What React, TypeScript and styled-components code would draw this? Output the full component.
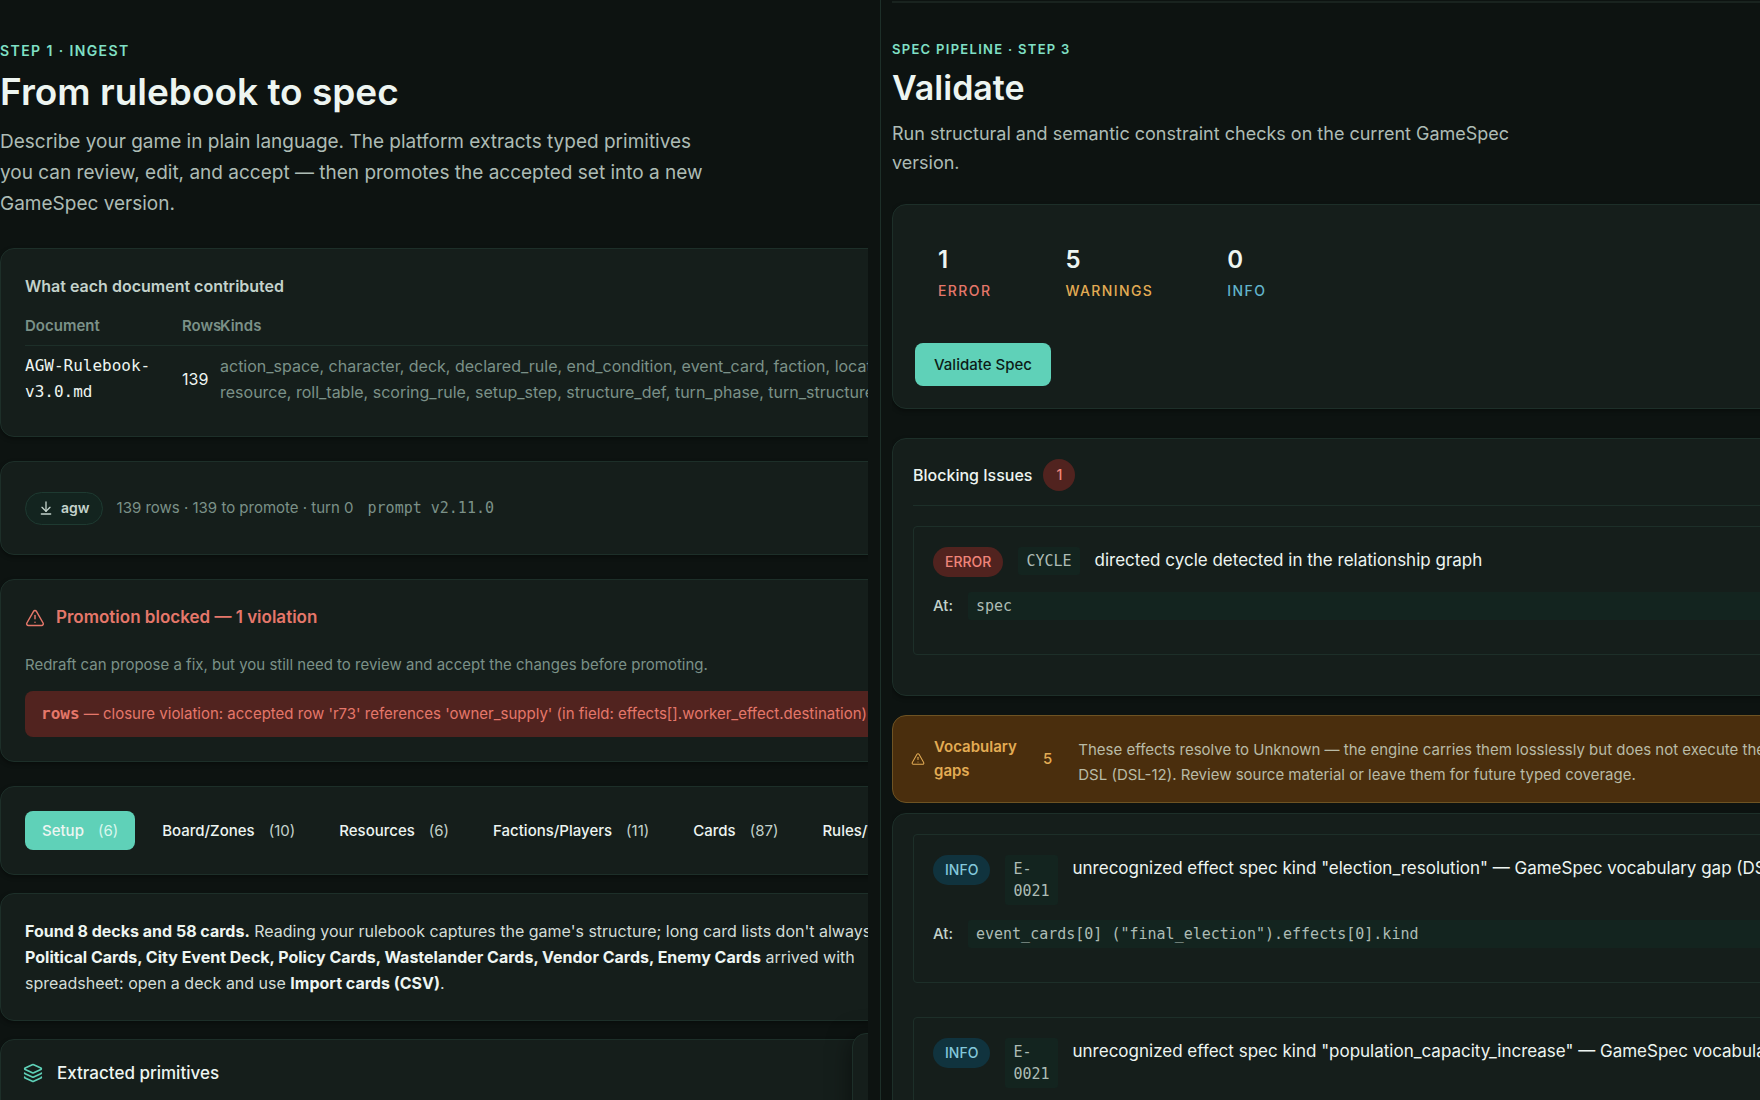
import React from "react";
import styled, { createGlobalStyle, css } from "styled-components";
import { ArrowDownToLine, Layers, TriangleAlert } from "lucide-react";

const color = {
  page: "#0d1311",
  card: "#151e1b",
  line: "#1d2f29",
  raised: "#13241f",
  text: "#edf5f1",
  soft: "#c3d2cb",
  body: "#adbcb5",
  muted: "#7b9188",
  teal: "#5fd1b8",
  mint: "#80e0c6",
  red: "#e5776a",
  redBg: "#51231f",
  gold: "#e3ac54",
  goldBg: "#4a2e0d",
  goldLine: "#6e5323",
  blue: "#62b4cc",
  blueBg: "#10333e",
};

const sans = `Inter, "Liberation Sans", sans-serif`;
const mono = `"DejaVu Sans Mono", "Liberation Mono", monospace`;

const GlobalStyle = createGlobalStyle`
  *, *::before, *::after { box-sizing: border-box; }
  body { margin: 0; background: ${color.page}; }
  h1, h2, p { margin: 0; }
  button { font: inherit; cursor: pointer; }
`;

const Page = styled.main`
  display: grid;
  grid-template-columns: 1fr 1fr;
  height: 100vh;
  overflow: hidden;
  background: ${color.page};
  color: ${color.text};
  font-family: ${sans};
  font-size: 16px;
  line-height: 26px;
`;

const Pane = styled.section<{ $divided?: boolean }>`
  min-width: 0;
  overflow: hidden;
  ${(p) =>
    p.$divided
      ? css`
          border-left: 1px solid ${color.line};
          padding-left: 11px;
        `
      : css`
          padding-right: 12px;
        `}
`;

const Viewport = styled.div`
  position: relative;
  height: 100%;
  overflow: hidden;
`;

const Canvas = styled.div`
  width: 125%;
  display: flex;
  flex-direction: column;
`;

const TopRule = styled.div`
  height: 3px;
  border-bottom: 2px solid #19231f;
`;

const Header = styled.header<{ $compact?: boolean }>`
  display: flex;
  flex-direction: column;
  padding: ${(p) => (p.$compact ? "36px 0 27px" : "41px 0 29px")};
`;

const Eyebrow = styled.p<{ $compact?: boolean }>`
  color: ${color.mint};
  font-size: ${(p) => (p.$compact ? 13 : 14)}px;
  font-weight: 600;
  line-height: 20px;
  letter-spacing: 0.1em;
  text-transform: uppercase;
`;

const PageTitle = styled.h1<{ $compact?: boolean }>`
  margin-top: 9px;
  font-size: ${(p) => (p.$compact ? 34 : 37)}px;
  font-weight: 600;
  line-height: ${(p) => (p.$compact ? 40 : 44)}px;
`;

const Lead = styled.p<{ $compact?: boolean }>`
  margin-top: ${(p) => (p.$compact ? 11 : 12)}px;
  max-width: ${(p) => (p.$compact ? 660 : 720)}px;
  color: ${color.body};
  font-size: ${(p) => (p.$compact ? 18 : 19)}px;
  line-height: ${(p) => (p.$compact ? 29 : 31)}px;
`;

const Card = styled.section<{ $pad?: number; $gap?: number }>`
  margin-bottom: ${(p) => p.$gap ?? 24}px;
  padding: ${(p) => p.$pad ?? 24}px;
  border: 1px solid ${color.line};
  border-radius: 14px;
  background: ${color.card};
  box-shadow: 0 2px 4px rgba(0, 0, 0, 0.35);
  white-space: nowrap;
`;

const CardTitle = styled.h2`
  margin-bottom: 8px;
  color: ${color.soft};
  font-size: 16px;
  font-weight: 600;
  line-height: 26px;
`;

const DocTable = styled.table`
  width: 100%;
  table-layout: fixed;
  border-collapse: collapse;
`;

const HeadCell = styled.th<{ $width?: number }>`
  width: ${(p) => (p.$width ? `${p.$width}px` : "auto")};
  padding: 8px 0;
  border-bottom: 1px solid ${color.line};
  color: ${color.muted};
  font-size: 15px;
  font-weight: 600;
  line-height: 22px;
  text-align: left;
`;

const Cell = styled.td<{ $tone?: "file" | "muted" }>`
  padding: 7px 0;
  vertical-align: middle;
  ${(p) =>
    p.$tone === "file" &&
    css`
      font-family: ${mono};
      white-space: normal;
    `}
  ${(p) =>
    p.$tone === "muted" &&
    css`
      color: ${color.muted};
    `}
`;

const SummaryRow = styled.div`
  display: flex;
  align-items: center;
  gap: 14px;
  height: 44px;
  color: ${color.muted};
  font-size: 15px;
`;

const SourcePill = styled.button`
  display: flex;
  align-items: center;
  gap: 7px;
  height: 33px;
  padding: 0 12px;
  border: 1px solid #1e3a31;
  border-radius: 17px;
  background: ${color.raised};
  color: ${color.soft};
  font-size: 14px;
  font-weight: 600;
`;

const MonoText = styled.span`
  font-family: ${mono};
  font-size: 15px;
`;

const AlertTitle = styled.h2`
  display: flex;
  align-items: center;
  gap: 11px;
  margin-bottom: 22px;
  color: ${color.red};
  font-size: 17px;
  font-weight: 600;
  line-height: 27px;
`;

const Hint = styled.p`
  margin-bottom: 14px;
  color: ${color.muted};
  font-size: 15px;
  line-height: 24px;
`;

const Violation = styled.p`
  padding: 10px 16px;
  border-radius: 8px;
  background: ${color.redBg};
  color: ${color.red};
  font-size: 15px;
`;

const ViolationKey = styled.strong`
  font-family: ${mono};
  font-size: 16px;
  font-weight: 700;
`;

const Tabs = styled.nav`
  display: flex;
  gap: 10px;
`;

const Tab = styled.button<{ $active?: boolean }>`
  display: flex;
  flex: none;
  gap: 14px;
  padding: 6px 16px;
  border: 1px solid transparent;
  border-radius: 8px;
  background: ${(p) => (p.$active ? color.teal : "transparent")};
  color: ${color.text};
  font-size: 15px;
  font-weight: 500;
  line-height: 25px;
`;

const TabCount = styled.span<{ $active?: boolean }>`
  color: ${(p) => (p.$active ? "#d9f7ee" : color.soft)};
  font-weight: 400;
`;

const Prose = styled.p`
  color: #d3ddd8;
  strong {
    color: ${color.text};
    font-weight: 700;
  }
`;

const SectionTitle = styled.h2`
  display: flex;
  align-items: flex-start;
  gap: 14px;
  min-height: 60px;
  font-size: 17px;
  font-weight: 500;
  line-height: 22px;
  svg {
    margin-top: 1px;
    color: ${color.teal};
  }
`;

const FloatingPanel = styled.aside`
  position: absolute;
  right: -184px;
  bottom: -33px;
  width: 200px;
  height: 100px;
  border: 1px solid ${color.line};
  border-radius: 14px;
  background: ${color.card};
  box-shadow: 0 4px 24px rgba(0, 0, 0, 0.5);
`;

const Stats = styled.dl`
  display: flex;
  gap: 28px;
  margin: 0 0 23px;
  padding: 18px 0;
`;

const Stat = styled.div`
  display: flex;
  flex-direction: column-reverse;
  gap: 5px;
  padding: 0 23px;
`;

const StatLabel = styled.dt<{ $color: string }>`
  color: ${(p) => p.$color};
  font-size: 14px;
  font-weight: 500;
  line-height: 22px;
  letter-spacing: 0.1em;
`;

const StatValue = styled.dd`
  margin: 0;
  font-size: 24px;
  font-weight: 600;
  line-height: 30px;
`;

const PrimaryButton = styled.button`
  display: block;
  padding: 9px 19px;
  border: 0;
  border-radius: 8px;
  background: ${color.teal};
  color: #0c1c17;
  font-size: 15px;
  font-weight: 500;
  line-height: 25px;
`;

const GroupHead = styled.header`
  display: flex;
  align-items: center;
  gap: 11px;
  margin-bottom: 20px;
  padding-bottom: 14px;
  border-bottom: 1px solid ${color.line};
`;

const GroupTitle = styled.h2`
  font-size: 16px;
  font-weight: 500;
`;

const CountBadge = styled.span`
  width: 32px;
  border-radius: 16px;
  background: ${color.redBg};
  color: #f0857a;
  font-size: 14px;
  font-weight: 500;
  line-height: 32px;
  text-align: center;
`;

const IssueList = styled.div`
  display: flex;
  flex-direction: column;
  gap: 14px;
`;

const IssueBox = styled.article`
  margin-bottom: 20px;
  padding: 20px 19px 34px;
  border: 1px solid ${color.line};
  border-radius: 4px;
`;

const IssueRow = styled.div`
  display: flex;
  align-items: flex-start;
  gap: 15px;
  margin-bottom: 15px;
`;

const Severity = styled.span<{ $info?: boolean }>`
  padding: 0 12px;
  border-radius: 15px;
  background: ${(p) => (p.$info ? color.blueBg : color.redBg)};
  color: ${(p) => (p.$info ? "#83c8dc" : "#f0857a")};
  font-size: 14px;
  font-weight: 500;
  line-height: 30px;
`;

const Chip = styled.code<{ $wide?: boolean }>`
  width: ${(p) => (p.$wide ? "auto" : "min-content")};
  flex: ${(p) => (p.$wide ? "1" : "none")};
  padding: 3px 8px;
  border-radius: 3px;
  background: ${color.raised};
  color: ${color.body};
  font-family: ${mono};
  font-size: 15px;
  line-height: 22px;
  white-space: ${(p) => (p.$wide ? "nowrap" : "normal")};
`;

const Message = styled.p`
  font-size: 17px;
  line-height: 26px;
`;

const Location = styled.div`
  display: flex;
  gap: 15px;
  color: ${color.soft};
  font-size: 15px;
  font-weight: 500;
  line-height: 28px;
`;

const Banner = styled.section`
  display: flex;
  align-items: center;
  margin: -5px 0 10px;
  padding: 15px 18px;
  border: 1px solid ${color.goldLine};
  border-radius: 14px;
  background: ${color.goldBg};
  color: ${color.gold};
  font-size: 15px;
  white-space: nowrap;
`;

const BannerTitle = styled.h2`
  width: 96px;
  margin-left: 9px;
  font-size: 15px;
  font-weight: 600;
  line-height: 24px;
  white-space: normal;
`;

const BannerCount = styled.span`
  padding: 0 13px;
  font-weight: 500;
`;

const BannerText = styled.p`
  margin-left: 13px;
  padding-top: 6px;
  color: #b9bba6;
  line-height: 25px;
`;

type IssueProps = { info?: boolean; code: string; message: string; at: string };

function Issue({ info, code, message, at }: IssueProps) {
  return (
    <IssueBox>
      <IssueRow>
        <Severity $info={info}>{info ? "INFO" : "ERROR"}</Severity>
        <Chip>{code}</Chip>
        <Message>{message}</Message>
      </IssueRow>
      <Location>
        <span>At:</span>
        <Chip $wide>{at}</Chip>
      </Location>
    </IssueBox>
  );
}

const tabs: [string, number][] = [
  ["Setup", 6],
  ["Board/Zones", 10],
  ["Resources", 6],
  ["Factions/Players", 11],
  ["Cards", 87],
  ["Rules/Turns", 19],
];

function IngestPane() {
  return (
    <Pane>
      <Viewport>
        <Canvas>
          <Header>
            <Eyebrow>Step 1 · Ingest</Eyebrow>
            <PageTitle>From rulebook to spec</PageTitle>
            <Lead>
              Describe your game in plain language. The platform extracts typed primitives you can
              review, edit, and accept — then promotes the accepted set into a new GameSpec version.
            </Lead>
          </Header>

          <Card>
            <CardTitle>What each document contributed</CardTitle>
            <DocTable>
              <thead>
                <tr>
                  <HeadCell $width={157}>Document</HeadCell>
                  <HeadCell $width={38}>Rows</HeadCell>
                  <HeadCell>Kinds</HeadCell>
                </tr>
              </thead>
              <tbody>
                <tr>
                  <Cell $tone="file">AGW-Rulebook-v3.0.md</Cell>
                  <Cell>139</Cell>
                  <Cell $tone="muted">
                    action_space, character, deck, declared_rule, end_condition, event_card, faction, location,
                    <br />
                    resource, roll_table, scoring_rule, setup_step, structure_def, turn_phase, turn_structure
                  </Cell>
                </tr>
              </tbody>
            </DocTable>
          </Card>

          <Card>
            <SummaryRow>
              <SourcePill>
                <ArrowDownToLine size={16} />
                agw
              </SourcePill>
              <span>139 rows · 139 to promote · turn 0</span>
              <MonoText>prompt v2.11.0</MonoText>
            </SummaryRow>
          </Card>

          <Card>
            <AlertTitle>
              <TriangleAlert size={20} strokeWidth={1.75} />
              Promotion blocked — 1 violation
            </AlertTitle>
            <Hint>
              Redraft can propose a fix, but you still need to review and accept the changes before promoting.
            </Hint>
            <Violation>
              <ViolationKey>rows</ViolationKey> — closure violation: accepted row 'r73' references
              'owner_supply' (in field: effects[].worker_effect.destination)
            </Violation>
          </Card>

          <Card $gap={18}>
            <Tabs>
              {tabs.map(([label, count], i) => (
                <Tab key={label} $active={i === 0}>
                  {label}
                  <TabCount $active={i === 0}>({count})</TabCount>
                </Tab>
              ))}
            </Tabs>
          </Card>

          <Card $gap={18}>
            <Prose>
              <strong>Found 8 decks and 58 cards.</strong> Reading your rulebook captures the game's
              structure; long card lists don't always
              <br />
              <strong>
                Political Cards, City Event Deck, Policy Cards, Wastelander Cards, Vendor Cards, Enemy Cards
              </strong>{" "}
              arrived with
              <br />
              spreadsheet: open a deck and use <strong>Import cards (CSV)</strong>.
            </Prose>
          </Card>

          <Card $pad={22}>
            <SectionTitle>
              <Layers size={20} />
              Extracted primitives
            </SectionTitle>
          </Card>
        </Canvas>
        <FloatingPanel />
      </Viewport>
    </Pane>
  );
}

function ValidatePane() {
  return (
    <Pane $divided>
      <Viewport>
        <Canvas>
          <TopRule />
          <Header $compact>
            <Eyebrow $compact>Spec pipeline · Step 3</Eyebrow>
            <PageTitle $compact>Validate</PageTitle>
            <Lead $compact>
              Run structural and semantic constraint checks on the current GameSpec version.
            </Lead>
          </Header>

          <Card $pad={22} $gap={29}>
            <Stats>
              <Stat>
                <StatLabel $color={color.red}>ERROR</StatLabel>
                <StatValue>1</StatValue>
              </Stat>
              <Stat>
                <StatLabel $color={color.gold}>WARNINGS</StatLabel>
                <StatValue>5</StatValue>
              </Stat>
              <Stat>
                <StatLabel $color={color.blue}>INFO</StatLabel>
                <StatValue>0</StatValue>
              </Stat>
            </Stats>
            <PrimaryButton>Validate Spec</PrimaryButton>
          </Card>

          <Card $pad={20}>
            <GroupHead>
              <GroupTitle>Blocking Issues</GroupTitle>
              <CountBadge>1</CountBadge>
            </GroupHead>
            <IssueList>
              <Issue code="CYCLE" message="directed cycle detected in the relationship graph" at="spec" />
            </IssueList>
          </Card>

          <Banner>
            <TriangleAlert size={14} strokeWidth={1.75} />
            <BannerTitle>Vocabulary gaps</BannerTitle>
            <BannerCount>5</BannerCount>
            <BannerText>
              These effects resolve to Unknown — the engine carries them losslessly but does not execute them.
              <br />
              DSL (DSL-12). Review source material or leave them for future typed coverage.
            </BannerText>
          </Banner>

          <Card $pad={20}>
            <IssueList>
              <Issue
                info
                code="E-0021"
                message={'unrecognized effect spec kind "election_resolution" — GameSpec vocabulary gap (DSL-12)'}
                at={'event_cards[0] ("final_election").effects[0].kind'}
              />
              <Issue
                info
                code="E-0021"
                message={'unrecognized effect spec kind "population_capacity_increase" — GameSpec vocabulary gap (DSL-12)'}
                at={'event_cards[1] ("population").effects[0].kind'}
              />
            </IssueList>
          </Card>
        </Canvas>
      </Viewport>
    </Pane>
  );
}

export default function App() {
  return (
    <>
      <GlobalStyle />
      <Page>
        <IngestPane />
        <ValidatePane />
      </Page>
    </>
  );
}
